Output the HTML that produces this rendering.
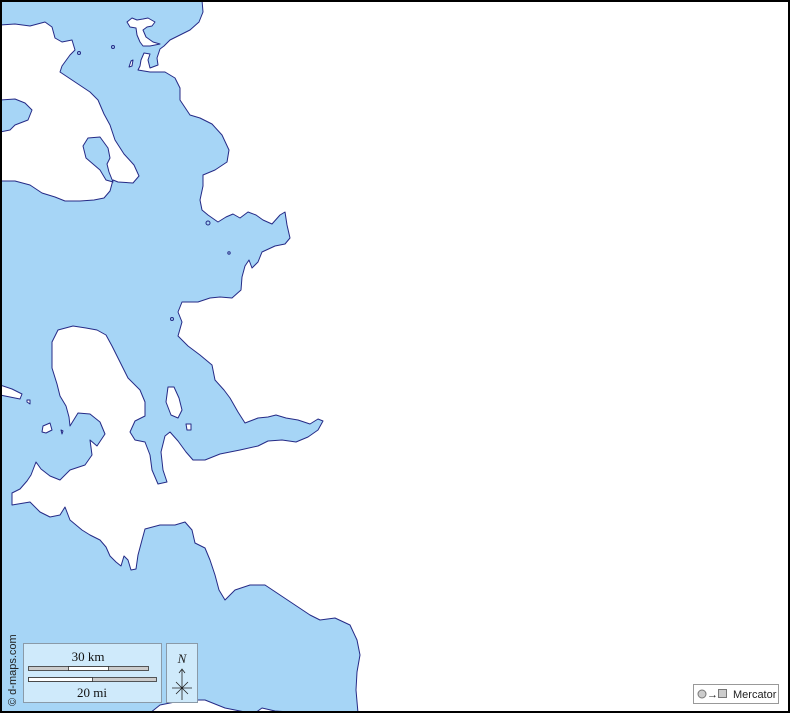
<!DOCTYPE html>
<html><head><meta charset="utf-8"><style>
html,body{margin:0;padding:0;background:#fff}
svg{display:block}
</style></head><body>
<svg width="790" height="713" viewBox="0 0 790 713" xmlns="http://www.w3.org/2000/svg">
<rect x="0" y="0" width="790" height="713" fill="#a6d5f6"/>
<g fill="#fff" stroke="#252a86" stroke-width="1" stroke-linejoin="round">
<!-- mainland -->
<path d="M202,0 L203,12 L199,22 L190,30 L178,36 L170,40 L164,46 L160,49 L157,58 L158,65 L150,68 L148,60 L150,54 L144,53 L141,60 L140,66 L138,70 L150,72 L165,72 L175,78 L180,88 L180,100 L190,115 L200,118 L212,124 L222,135 L229,150 L227,162 L215,170 L203,175 L203,186 L200,200 L202,210 L208,215 L218,222 L226,217 L233,214 L240,218 L248,212 L256,215 L263,220 L272,224 L280,215 L285,212 L287,225 L290,238 L285,244 L275,246 L262,252 L258,262 L252,268 L249,260 L245,266 L242,277 L241,290 L232,298 L220,297 L210,298 L198,302 L182,302 L178,312 L182,322 L178,336 L188,346 L200,355 L212,365 L215,380 L224,390 L230,398 L238,412 L245,423 L258,418 L268,417 L276,415 L286,418 L298,420 L310,424 L318,419 L323,421 L318,430 L308,437 L296,442 L282,440 L268,441 L258,446 L240,450 L220,454 L205,460 L193,460 L186,452 L178,441 L170,432 L165,436 L161,452 L163,470 L167,482 L158,484 L152,470 L150,455 L145,442 L135,440 L130,432 L135,421 L145,416 L145,402 L140,390 L128,378 L120,362 L112,346 L106,335 L97,330 L86,328 L73,326 L58,330 L52,342 L52,368 L57,384 L60,396 L66,406 L69,417 L70,426 L78,413 L90,414 L100,422 L105,434 L97,446 L90,440 L92,455 L85,465 L70,470 L60,480 L50,476 L41,469 L36,462 L31,475 L27,481 L20,489 L12,493 L12,505 L30,502 L40,512 L50,517 L60,515 L65,507 L70,520 L76,525 L82,530 L90,535 L100,540 L106,547 L110,556 L116,562 L121,566 L124,556 L128,560 L131,570 L136,569 L138,555 L142,540 L145,529 L160,525 L175,525 L185,522 L192,530 L195,543 L205,548 L210,560 L215,575 L219,590 L225,600 L235,590 L250,585 L265,585 L280,595 L295,605 L310,615 L320,620 L335,618 L350,625 L357,640 L360,655 L357,672 L356,690 L358,713 L790,713 L790,0 Z"/>
<!-- top-left land -->
<path d="M0,25 L15,24 L30,26 L45,22 L52,27 L55,38 L62,42 L72,40 L75,50 L70,55 L62,66 L60,72 L75,82 L90,92 L98,100 L104,114 L110,125 L115,140 L124,154 L134,165 L139,176 L133,183 L118,182 L113,180 L110,191 L104,198 L94,200 L80,201 L65,201 L55,197 L42,193 L30,185 L15,181 L0,181 Z"/>
<path d="M127,22 L132,18 L137,20 L143,19 L148,18 L155,22 L152,26 L147,27 L143,30 L146,37 L153,42 L160,44 L150,46 L143,46 L140,42 L137,35 L136,28 L130,27 Z"/>
<path d="M129,67 L131,61 L133,60 L132,66 Z"/>
<path d="M168,387 L174,387 L179,398 L182,410 L178,418 L171,415 L166,402 Z"/>
<path d="M0,385 L12,389 L22,394 L20,399 L10,397 L0,395 Z"/>
<path d="M27,400 L30,400 L30,404 L27,402 Z"/>
<path d="M43,426 L50,423 L52,430 L46,433 L42,432 Z"/>
<path d="M61,430 L63,431 L62,434 Z"/>
<path d="M186,424 L191,424 L191,430 L187,430 Z"/>
<path d="M150,713 L160,705 L185,700 L205,700 L225,708 L245,712 L250,713 Z"/>
<path d="M255,713 L262,708 L275,711 L290,712 L292,713 Z"/>
</g>
<g fill="#a6d5f6" stroke="#252a86" stroke-width="1" stroke-linejoin="round">
<path d="M0,100 L15,99 L25,103 L32,110 L28,120 L15,125 L10,130 L0,132 Z"/>
<path d="M83,146 L88,138 L100,137 L108,148 L110,158 L107,164 L109,172 L113,182 L106,180 L100,170 L86,158 Z"/>
<circle cx="79" cy="53" r="1.5"/><circle cx="113" cy="47" r="1.5"/><circle cx="208" cy="223" r="2"/><circle cx="172" cy="319" r="1.5"/><circle cx="229" cy="253" r="1.2"/>
</g>
<!-- scale box -->
<rect x="23.5" y="643.5" width="138" height="59" fill="#cfeafb" stroke="#8a9aa8"/>
<text x="88" y="661" font-family="Liberation Serif, serif" font-size="13" text-anchor="middle" fill="#111">30 km</text>
<rect x="28.5" y="666.5" width="120" height="4" fill="#ccc" stroke="#333" stroke-width="0.8"/>
<rect x="68.5" y="666.5" width="40" height="4" fill="#fff" stroke="#333" stroke-width="0.8"/>
<rect x="28.5" y="677.5" width="128" height="4" fill="#ccc" stroke="#333" stroke-width="0.8"/>
<rect x="28.5" y="677.5" width="64" height="4" fill="#fff" stroke="#333" stroke-width="0.8"/>
<text x="92" y="697" font-family="Liberation Serif, serif" font-size="13" text-anchor="middle" fill="#111">20 mi</text>
<rect x="166.5" y="643.5" width="31" height="59" fill="#cfeafb" stroke="#8a9aa8"/>
<text x="182" y="663" font-family="Liberation Serif, serif" font-size="13" font-style="italic" text-anchor="middle" fill="#222">N</text>
<g stroke="#222" stroke-width="0.8" fill="none">
<path d="M182,670 L182,700 M179,673 L182,669 L185,673 M172,688 L192,688 M176,682 L188,694 M188,682 L176,694"/>
</g>
<text x="16" y="706" transform="rotate(-90 16 706)" font-family="Liberation Sans, sans-serif" font-size="11" fill="#222">© d-maps.com</text>
<!-- projection -->
<rect x="693.5" y="684.5" width="85" height="19" fill="#fff" stroke="#999"/>
<circle cx="702" cy="694" r="4" fill="#ccc" stroke="#777"/>
<text x="707" y="698" font-family="Liberation Sans, sans-serif" font-size="11" fill="#222">→</text>
<rect x="718.5" y="689.5" width="8" height="8" fill="#ccc" stroke="#777"/>
<text x="733" y="698" font-family="Liberation Sans, sans-serif" font-size="11" fill="#222">Mercator</text>
<rect x="1" y="1" width="788" height="711" fill="none" stroke="#000" stroke-width="2"/>
</svg>
</body></html>
